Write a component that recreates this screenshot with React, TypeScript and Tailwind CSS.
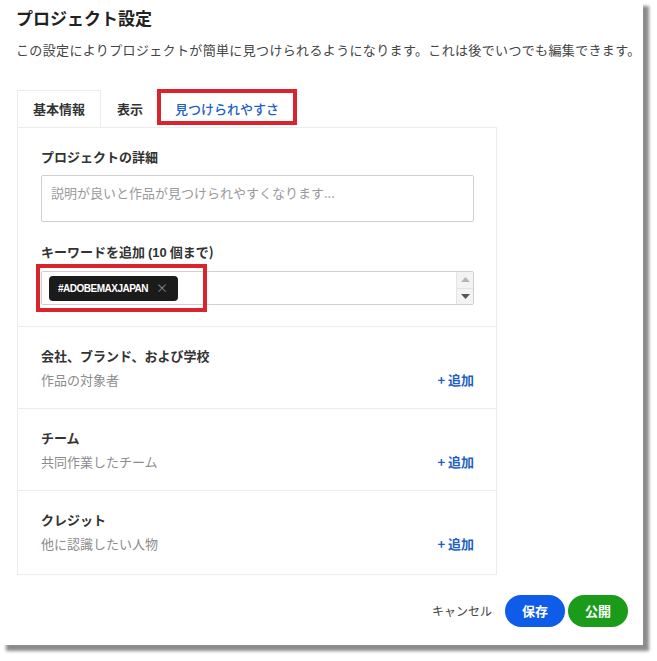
import { useState } from 'react';

const jp = "font-['Noto_Sans_CJK_JP','Noto_Sans',sans-serif]";

interface Section {
  title: string;
  note: string;
}

const sections: Section[] = [
  { title: '会社、ブランド、および学校', note: '作品の対象者' },
  { title: 'チーム', note: '共同作業したチーム' },
  { title: 'クレジット', note: '他に認識したい人物' },
];

function Spinner() {
  return (
    <div className="flex flex-col w-[17px] h-full bg-[#f3f3f3] border-l border-[#e4e4e4]">
      <div className="flex-1 flex items-center justify-center border-b border-[#e4e4e4]">
        <svg width="9" height="5" viewBox="0 0 9 5">
          <path d="M0 5 L4.5 0 L9 5 Z" fill="#b5b5b5" />
        </svg>
      </div>
      <div className="flex-1 flex items-center justify-center">
        <svg width="9" height="5" viewBox="0 0 9 5">
          <path d="M0 0 L4.5 5 L9 0 Z" fill="#555" />
        </svg>
      </div>
    </div>
  );
}

function App() {
  const [tab] = useState(2);
  const tabs = ['基本情報', '表示', '見つけられやすさ'];

  return (
    <div className={`w-[657px] h-[661px] bg-white ${jp}`}>
      <div className="w-[643px] h-[645px] bg-white shadow-[6px_6px_3px_rgba(0,0,0,0.45)] flex flex-col">
        <h1 className="pl-4 pt-[6px] text-[17px] leading-6 font-bold text-[#222]">プロジェクト設定</h1>
        <p className="pl-4 mt-[10px] text-[13px] leading-5 tracking-[0.35px] text-[#444]">
          この設定によりプロジェクトが簡単に見つけられるようになります。これは後でいつでも編集できます。
        </p>

        {/* tab strip */}
        <div className="relative ml-[17px] mt-[30px] flex h-[37px] w-[480px]">
          {tabs.map((t, i) => (
            <div
              key={t}
              className={`flex items-center text-[13px] ${i === 0 ? 'px-[15px] border-l border-t border-r border-[#ececec]' : 'px-4'} ${i === tab ? 'text-[#1d5fc4] font-medium' : 'text-[#333] font-bold'}`}
            >
              {t}
            </div>
          ))}
          <div className="absolute left-[140px] top-[-1px] w-[140px] h-[36px] border-4 border-[#d9232d]" />
        </div>

        {/* panel */}
        <div className="ml-[17px] w-[480px] h-[448px] border border-[#ececec] flex flex-col">
          <div className="relative pl-[23px] pr-[22px] pt-[19px] pb-[21px] border-b border-[#ececec]">
            <div className="text-[13px] leading-5 font-bold text-[#333]">プロジェクトの詳細</div>
            <div className="mt-2 h-[47px] border border-[#cfcfcf] rounded-[2px] px-[9px] pt-[7px] text-[13px] leading-5 text-[#9a9a9a]">
              説明が良いと作品が見つけられやすくなります...
            </div>
            <div className="mt-5 text-[13px] leading-5 font-bold text-[#333]">
              キーワードを追加 <span className="font-['Liberation_Sans',sans-serif]">(10</span> 個まで)
            </div>
            <div className="mt-2 h-[34px] border border-[#cfcfcf] rounded-[2px] flex items-center">
              <div className="ml-[7px] h-[25px] pl-[9px] pr-[10px] rounded-[4px] bg-[#1b1b1b] flex items-center gap-[8px]">
                <span className="font-['Liberation_Sans',sans-serif] text-[10px] font-bold text-white tracking-[-0.5px]">#ADOBEMAXJAPAN</span>
                <span className="text-[12px] text-[#8a8a8a] leading-none">×</span>
              </div>
              <div className="flex-1" />
              <Spinner />
            </div>
            <div className="absolute left-[18px] top-[136px] w-[171px] h-[48px] border-4 border-[#d9232d]" />
          </div>

          {sections.map((s, i) => (
            <div
              key={s.title}
              className={`h-[82px] pl-[23px] pr-[22px] pt-[19px] ${i < sections.length - 1 ? 'border-b border-[#ececec]' : ''}`}
            >
              <div className="text-[13px] leading-5 font-bold text-[#333]">{s.title}</div>
              <div className="mt-1 flex items-center justify-between">
                <span className="text-[13px] leading-5 text-[#8c8c8c]">{s.note}</span>
                <span className="text-[13px] leading-5 font-bold text-[#1d5fc4]">+ 追加</span>
              </div>
            </div>
          ))}
        </div>

        {/* footer */}
        <div className="mt-[20px] ml-[415px] flex items-center h-8">
          <span className="text-[12px] text-[#444] mr-[13px] ml-[17px]">キャンセル</span>
          <button className="w-[60px] h-8 rounded-full bg-[#0f5ce8] text-white text-[13px] font-bold">保存</button>
          <button className="ml-[3px] w-[60px] h-8 rounded-full bg-[#1a9c1a] text-white text-[13px] font-bold">公開</button>
        </div>
      </div>
    </div>
  );
}

export default App;
